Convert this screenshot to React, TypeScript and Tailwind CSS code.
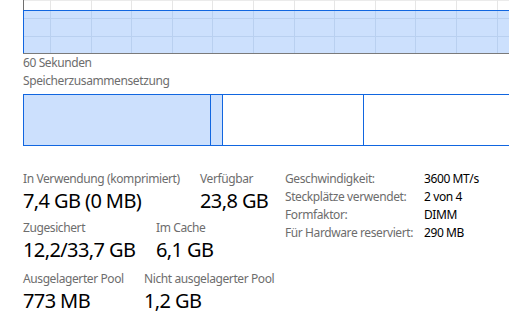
import React from 'react'

const gridX = [27, 68, 108, 149, 189, 230, 271, 311, 352, 392, 433, 474]

const UsageChart: React.FC = () => (
    <svg width="486" height="54" className="block">
        <rect x="0" y="0" width="486" height="54" fill="#ffffff" />
        <line x1="0" y1="0.5" x2="486" y2="0.5" stroke="#ebebeb" />
        {gridX.map((x) => (
            <line key={'w' + x} x1={x + 0.5} y1="0" x2={x + 0.5} y2="10" stroke="#e6e6e6" />
        ))}
        <rect x="0" y="10" width="486" height="43" fill="#cce0fd" />
        {gridX.map((x) => (
            <line key={'b' + x} x1={x + 0.5} y1="11" x2={x + 0.5} y2="53" stroke="#b9d0f0" />
        ))}
        <line x1="0" y1="18.5" x2="486" y2="18.5" stroke="#b9d0f0" />
        <line x1="0" y1="36.5" x2="486" y2="36.5" stroke="#b9d0f0" />
        <line x1="0" y1="10.5" x2="486" y2="10.5" stroke="#1166e0" />
        <line x1="0.5" y1="0" x2="0.5" y2="10" stroke="#6f6f6f" />
        <line x1="0.5" y1="10" x2="0.5" y2="53" stroke="#1166e0" />
        <line x1="0" y1="53.5" x2="486" y2="53.5" stroke="#7a7a7a" />
    </svg>
)

type StatProps = { label: string; value: string; width?: string }

const Stat: React.FC<StatProps> = ({ label, value, width }) => (
    <div className={width}>
        <div className="text-[12px] leading-[16px] tracking-[-0.4px] text-[#6d6d6d] whitespace-nowrap">{label}</div>
        <div className="text-[20px] leading-[28px] tracking-[-0.6px] text-black whitespace-nowrap">{value}</div>
    </div>
)

const details = [
    ['Geschwindigkeit:', '3600 MT/s'],
    ['Steckplätze verwendet:', '2 von 4'],
    ['Formfaktor:', 'DIMM'],
    ['Für Hardware reserviert:', '290 MB'],
]

export default function App() {
    return (
        <div className="w-[509px] h-[323px] overflow-hidden bg-white font-['Noto_Sans',sans-serif]">
            <div className="pl-[23px]">
                <UsageChart />
                <div className="text-[12px] leading-[18px] tracking-[-0.4px] text-[#6d6d6d]">60 Sekunden</div>
                <div className="text-[12px] leading-[18px] tracking-[-0.4px] text-[#6d6d6d]">Speicherzusammensetzung</div>
                <div className="mt-[4px] flex h-[52px] border border-r-0 border-[#1166e0]">
                    <div className="w-[187px] bg-[#cce0fd] border-r border-[#1166e0]"></div>
                    <div className="w-[12px] bg-[#cce0fd] border-r border-[#1166e0]"></div>
                    <div className="w-[141px] border-r border-[#1166e0]"></div>
                    <div className="flex-1"></div>
                </div>
            </div>
            <div className="mt-[24px] flex">
                <div className="w-[262px] ml-[23px] pt-[1px]">
                    <div className="flex">
                        <Stat width="w-[177px]" label="In Verwendung (komprimiert)" value="7,4 GB (0 MB)" />
                        <Stat label="Verfügbar" value="23,8 GB" />
                    </div>
                    <div className="flex mt-[5px]">
                        <Stat width="w-[133px]" label="Zugesichert" value="12,2/33,7 GB" />
                        <Stat label="Im Cache" value="6,1 GB" />
                    </div>
                    <div className="flex mt-[7px]">
                        <Stat width="w-[121px]" label="Ausgelagerter Pool" value="773 MB" />
                        <Stat label="Nicht ausgelagerter Pool" value="1,2 GB" />
                    </div>
                </div>
                <div className="flex flex-col">
                    {details.map(([k, v]) => (
                        <div key={k} className="flex text-[12px] leading-[18px] tracking-[-0.4px]">
                            <span className="w-[139px] text-[#6d6d6d] whitespace-nowrap">{k}</span>
                            <span className="text-black whitespace-nowrap">{v}</span>
                        </div>
                    ))}
                </div>
            </div>
        </div>
    )
}
